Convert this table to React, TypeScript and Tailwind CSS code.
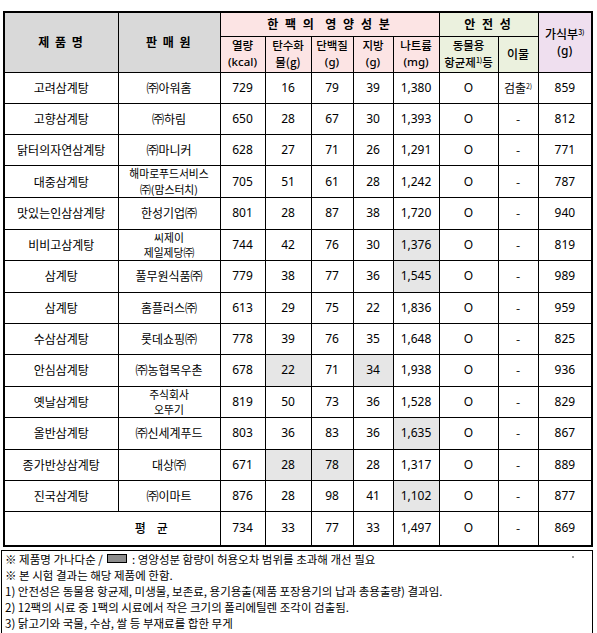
import React from "react";

type Row = {
  name: string;
  seller: string[];
  vals: string[];
  shaded?: number[];
  foreign?: boolean;
  edible: string;
};

const rows: Row[] = [
  { name: "고려삼계탕", seller: ["㈜아워홈"], vals: ["729", "16", "79", "39", "1,380"], foreign: true, edible: "859" },
  { name: "고향삼계탕", seller: ["㈜하림"], vals: ["650", "28", "67", "30", "1,393"], edible: "812" },
  { name: "닭터의자연삼계탕", seller: ["㈜마니커"], vals: ["628", "27", "71", "26", "1,291"], edible: "771" },
  { name: "대중삼계탕", seller: ["해마로푸드서비스", "㈜(맘스터치)"], vals: ["705", "51", "61", "28", "1,242"], edible: "787" },
  { name: "맛있는인삼삼계탕", seller: ["한성기업㈜"], vals: ["801", "28", "87", "38", "1,720"], edible: "940" },
  { name: "비비고삼계탕", seller: ["씨제이", "제일제당㈜"], vals: ["744", "42", "76", "30", "1,376"], shaded: [4], edible: "819" },
  { name: "삼계탕", seller: ["풀무원식품㈜"], vals: ["779", "38", "77", "36", "1,545"], shaded: [4], edible: "989" },
  { name: "삼계탕", seller: ["홈플러스㈜"], vals: ["613", "29", "75", "22", "1,836"], edible: "959" },
  { name: "수삼삼계탕", seller: ["롯데쇼핑㈜"], vals: ["778", "39", "76", "35", "1,648"], edible: "825" },
  { name: "안심삼계탕", seller: ["㈜농협목우촌"], vals: ["678", "22", "71", "34", "1,938"], shaded: [1, 3], edible: "936" },
  { name: "옛날삼계탕", seller: ["주식회사", "오뚜기"], vals: ["819", "50", "73", "36", "1,528"], edible: "829" },
  { name: "올반삼계탕", seller: ["㈜신세계푸드"], vals: ["803", "36", "83", "36", "1,635"], shaded: [4], edible: "867" },
  { name: "종가반상삼계탕", seller: ["대상㈜"], vals: ["671", "28", "78", "28", "1,317"], shaded: [1, 2], edible: "889" },
  { name: "진국삼계탕", seller: ["㈜이마트"], vals: ["876", "28", "98", "41", "1,102"], shaded: [4], edible: "877" },
];

const cell = "border border-black p-0 text-center align-middle";
const kr = { fontFamily: '"Noto Sans CJK KR", sans-serif' };
const num = { fontFamily: '"Noto Sans", "Noto Sans CJK KR", sans-serif' };

function Sup({ children }: { children: React.ReactNode }) {
  return <span className="relative -top-[4px] text-[7px] leading-none">{children}</span>;
}

export default function App() {
  return (
    <div className="w-[597px] h-[633px] bg-white text-black pt-[11px]" style={kr}>
      <div className="pl-[3px]">
        <table className="table-fixed border-collapse border-2 border-black w-[589px]">
          <colgroup>
            <col className="w-[114px]" />
            <col className="w-[102px]" />
            <col className="w-[45px]" />
            <col className="w-[46px]" />
            <col className="w-[42px]" />
            <col className="w-[40px]" />
            <col className="w-[46px]" />
            <col className="w-[59px]" />
            <col className="w-[40px]" />
            <col className="w-[54px]" />
          </colgroup>
          <thead>
            <tr className="h-[24px]">
              <th rowSpan={2} className={`${cell} bg-[#d9d9d9] text-[12px] font-bold tracking-[1.5px] whitespace-pre`}>
                제 품 명
              </th>
              <th rowSpan={2} className={`${cell} bg-[#d9d9d9] text-[12px] font-bold tracking-[1.5px] whitespace-pre`}>
                판 매 원
              </th>
              <th colSpan={5} className={`${cell} bg-[#fce4e4] text-[12px] font-bold tracking-[2px] whitespace-pre`}>
                한 팩 의  영 양 성 분
              </th>
              <th colSpan={2} className={`${cell} bg-[#ebf1de] text-[12px] font-bold tracking-[2px] whitespace-pre`}>
                안 전 성
              </th>
              <th rowSpan={2} className={`${cell} bg-[#efdfef] text-[12px] font-medium leading-[17.5px]`}>
                <div>
                  가식부<Sup>3)</Sup>
                </div>
                <div style={num}>(g)</div>
              </th>
            </tr>
            <tr className="h-[36px] text-[11.5px] font-medium leading-[16.7px]">
              <th className={`${cell} bg-[#fce4e4] font-medium`}>
                <div>열량</div>
                <div style={num}>(kcal)</div>
              </th>
              <th className={`${cell} bg-[#fce4e4] font-medium`}>
                <div>탄수화</div>
                <div>물(g)</div>
              </th>
              <th className={`${cell} bg-[#fce4e4] font-medium`}>
                <div>단백질</div>
                <div style={num}>(g)</div>
              </th>
              <th className={`${cell} bg-[#fce4e4] font-medium`}>
                <div>지방</div>
                <div style={num}>(g)</div>
              </th>
              <th className={`${cell} bg-[#fce4e4] font-medium`}>
                <div>나트륨</div>
                <div style={num}>(mg)</div>
              </th>
              <th className={`${cell} bg-[#ebf1de] font-medium`}>
                <div>동물용</div>
                <div className="whitespace-nowrap">
                  항균제<Sup>1)</Sup>등
                </div>
              </th>
              <th className={`${cell} bg-[#ebf1de] font-medium text-[12px]`}>이물</th>
            </tr>
          </thead>
          <tbody>
            {rows.map((r, i) => (
              <tr key={i} className="h-[31.3px]">
                <td className={`${cell} text-[12px]`}>{r.name}</td>
                <td
                  className={`${cell} ${
                    r.seller.length > 1 ? "text-[10.8px] leading-[15.4px]" : "text-[12px]"
                  }`}
                >
                  {r.seller.map((s, j) => (
                    <div key={j}>{s}</div>
                  ))}
                </td>
                {r.vals.map((v, j) => (
                  <td
                    key={j}
                    className={`${cell} text-[12px] ${r.shaded?.includes(j) ? "bg-[#e6e6e6]" : ""}`}
                    style={num}
                  >
                    {v}
                  </td>
                ))}
                <td className={`${cell} text-[12px]`} style={num}>
                  O
                </td>
                <td className={`${cell} text-[12px]`}>
                  {r.foreign ? (
                    <span>
                      검출<Sup>2)</Sup>
                    </span>
                  ) : (
                    "-"
                  )}
                </td>
                <td className={`${cell} text-[12px]`} style={num}>
                  {r.edible}
                </td>
              </tr>
            ))}
            <tr className="h-[34px] text-[12px]">
              <td colSpan={2} className={`${cell} pl-[78px] font-medium whitespace-pre`}>
                평    균
              </td>
              {["734", "33", "77", "33", "1,497", "O"].map((v, j) => (
                <td key={j} className={cell} style={num}>
                  {v}
                </td>
              ))}
              <td className={cell}>-</td>
              <td className={cell} style={num}>
                869
              </td>
            </tr>
          </tbody>
        </table>
      </div>
      <div className="relative mt-[3px] ml-[1px] w-[592px] h-[85px] border border-black px-[3px] text-[11.5px] leading-[16px]">
        <span className="absolute right-[18px] top-[5px] w-[2px] h-[2px] bg-[#999]" />
        <div className="flex items-center">
          <span className="whitespace-pre">※ 제품명 가나다순 / </span>
          <span className="inline-block w-[20px] h-[9px] bg-[#8c8c8c] border border-black mx-[2px]" />
          <span className="whitespace-pre"> : 영양성분 함량이 허용오차 범위를 초과해 개선 필요</span>
        </div>
        <div>※ 본 시험 결과는 해당 제품에 한함.</div>
        <div>1) 안전성은 동물용 항균제, 미생물, 보존료, 용기용출(제품 포장용기의 납과 총용출량) 결과임.</div>
        <div>2) 12팩의 시료 중 1팩의 시료에서 작은 크기의 폴리에틸렌 조각이 검출됨.</div>
        <div>3) 닭고기와 국물, 수삼, 쌀 등 부재료를 합한 무게</div>
      </div>
    </div>
  );
}
